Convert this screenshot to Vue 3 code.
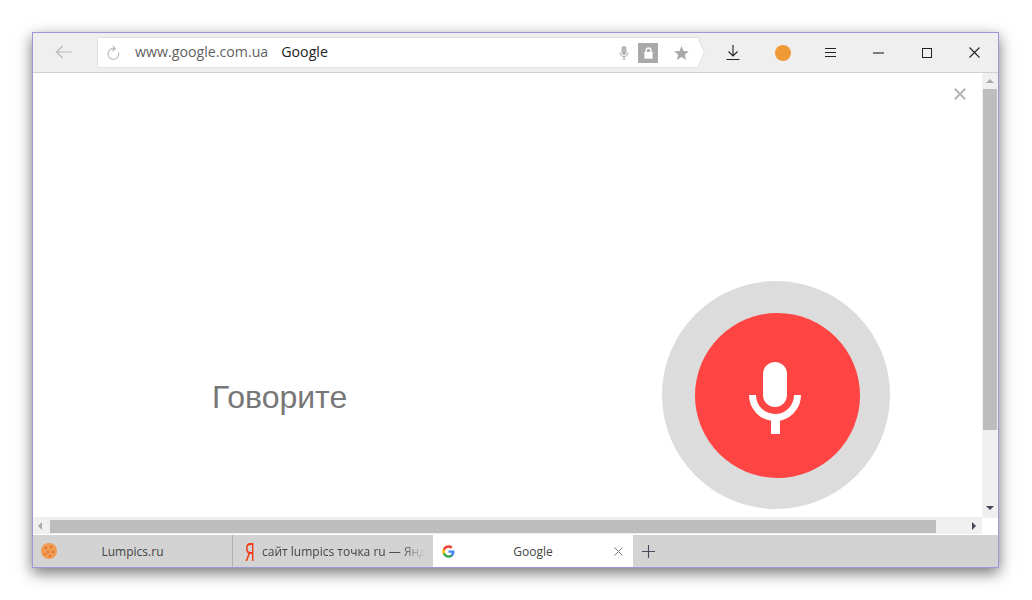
<template>
  <div class="screen">
    <div class="window">
      <header class="toolbar">
        <button class="back">
          <svg width="18" height="14" viewBox="0 0 18 14"><path d="M17 7H1.500M7.500 1L1.500 7l6 6" fill="none" stroke="#b9b9b9" stroke-width="1.200" /></svg>
        </button>
        <div class="address">
          <div class="address-box">
            <svg class="reload" width="14" height="16" viewBox="0 0 14 16"><path d="M8.500 3.600A5.400 5.400 0 1 0 12.600 7.500" fill="none" stroke="#b5b5b5" stroke-width="1.100" /><path d="M6.500 0.800L9.400 3.600 6.500 6" fill="none" stroke="#b5b5b5" stroke-width="1.100" /></svg>
            <span class="host">www.google.com.ua</span>
            <span class="title">Google</span>
            <svg class="small-mic" width="10" height="14" viewBox="0 0 10 14"><rect x="2.500" y="0" width="5" height="9" rx="2.500" fill="#b7b7b7" /><path d="M1 6.500a4 4 0 0 0 8 0" fill="none" stroke="#b7b7b7" stroke-width="1.200" /><rect x="4.300" y="10" width="1.500" height="4" fill="#b7b7b7" /></svg>
            <span class="lock">
              <svg width="9" height="12" viewBox="0 0 12 15"><rect x="0.500" y="6" width="11" height="9" fill="#fff" /><path d="M2.800 6.500V4a3.200 3.200 0 0 1 6.400 0v2.500" fill="none" stroke="#fff" stroke-width="1.800" /></svg>
            </span>
            <svg class="star" width="15" height="14" viewBox="0 0 15 14"><path d="M7.500 0l2 4.900 5.300.4-4 3.400 1.300 5.200-4.600-2.800-4.600 2.800 1.300-5.200-4-3.400 5.300-.4z" fill="#a9a9a9" /></svg>
          </div>
          <svg class="address-tip" width="8" height="31" viewBox="0 0 8 31"><path d="M0 0.500H0.500L7.300 15.500 0.500 30.500H0z" fill="#fff" stroke="#e2e2e2" /><rect x="0" y="1" width="1" height="29" fill="#fff" /></svg>
        </div>
        <div class="actions">
          <span class="tool tool-download">
            <svg width="14" height="15" viewBox="0 0 14 15"><path d="M7 0v11M2.500 6.500L7 11l4.500-4.500M0.500 14.500h13" fill="none" stroke="#222" stroke-width="1.100" /></svg>
          </span>
          <span class="tool"><i class="orange"></i></span>
          <span class="tool">
            <svg width="11" height="10" viewBox="0 0 11 10"><path d="M0 .5h11M0 4.500h11M0 8.500h11" stroke="#222" /></svg>
          </span>
          <span class="tool">
            <svg width="11" height="2" viewBox="0 0 11 2"><path d="M0 1h11" stroke="#222" stroke-width="1.100" /></svg>
          </span>
          <span class="tool">
            <svg width="10" height="10" viewBox="0 0 10 10"><rect x=".5" y=".5" width="9" height="9" fill="none" stroke="#222" /></svg>
          </span>
          <span class="tool">
            <svg width="11" height="11" viewBox="0 0 11 11"><path d="M.5.500l10 10M10.500.500l-10 10" stroke="#222" stroke-width="1.100" /></svg>
          </span>
        </div>
      </header>

      <div class="viewport">
        <div class="main-col">
          <main class="page">
            <svg class="page-close" width="12" height="12" viewBox="0 0 12 12"><path d="M.8.800l10.400 10.400M11.200.800L.8 11.200" stroke="#b4b4b4" stroke-width="2" /></svg>
            <div class="speech">
              <span class="speak">Говорите</span>
              <div class="mic-ring">
                <div class="mic-circle">
                  <svg width="52" height="72" viewBox="0 0 52 72">
                    <rect x="14" y="0" width="24" height="45" rx="12" fill="#fff" />
                    <path d="M3.500 33a22.500 22.500 0 0 0 45 0" fill="none" stroke="#fff" stroke-width="7" />
                    <rect x="22" y="55" width="9" height="17" fill="#fff" />
                  </svg>
                </div>
              </div>
            </div>
          </main>
          <div class="hscroll">
            <i class="arrow-left"></i>
            <div class="hthumb"></div>
            <i class="arrow-right"></i>
          </div>
        </div>
        <div class="side-col">
          <div class="vscroll">
            <i class="arrow-up"></i>
            <div class="vthumb"></div>
            <i class="arrow-down"></i>
          </div>
          <div class="corner"></div>
        </div>
      </div>

      <footer class="tabs">
        <div class="tab">
          <svg class="favicon" width="16" height="16" viewBox="0 0 16 16">
            <circle cx="8" cy="8" r="8" fill="#ef9a4f" />
            <circle cx="5" cy="5" r="1" fill="#d9622b" /><circle cx="10" cy="4" r="1" fill="#d9622b" />
            <circle cx="12" cy="9" r="1" fill="#d9622b" /><circle cx="7" cy="9" r="1" fill="#d9622b" />
            <circle cx="9" cy="13" r="1" fill="#d9622b" /><circle cx="4" cy="11" r="1" fill="#d9622b" />
          </svg>
          <span class="tab-label">Lumpics.ru</span>
        </div>
        <div class="tab tab-search">
          <span class="ya">Я</span>
          <span class="tab-fade">сайт lumpics точка ru — Яндекс</span>
        </div>
        <div class="tab tab-active">
          <svg class="favicon-g" width="13" height="13" viewBox="0 0 48 48">
            <path fill="#4285f4" d="M46 24.500c0-1.600-.1-3.100-.4-4.500H24v8.700h12.400c-.5 2.900-2.100 5.300-4.600 6.900v5.700h7.400C43.500 36.400 46 31 46 24.500z" />
            <path fill="#34a853" d="M24 47c6.200 0 11.400-2 15.200-5.500l-7.400-5.700c-2 1.400-4.700 2.200-7.800 2.200-6 0-11-4-12.800-9.500H3.600v5.900C7.400 41.800 15.100 47 24 47z" />
            <path fill="#fbbc05" d="M11.200 28.500c-.5-1.400-.7-2.900-.7-4.500s.3-3.100.7-4.500v-5.900H3.600C2.100 16.700 1 20.200 1 24s.9 7.300 2.600 10.400l7.600-5.900z" />
            <path fill="#ea4335" d="M24 10c3.400 0 6.400 1.200 8.800 3.400l6.600-6.600C35.400 3.200 30.200 1 24 1 15.100 1 7.400 6.200 3.600 13.600l7.600 5.900C13 14 18 10 24 10z" />
          </svg>
          <span class="tab-label">Google</span>
          <svg class="tab-close" width="9" height="9" viewBox="0 0 9 9"><path d="M.5.500l8 8M8.500.500l-8 8" stroke="#777" /></svg>
        </div>
        <svg class="new-tab" width="13" height="13" viewBox="0 0 13 13"><path d="M6.500 0v13M0 6.500h13" stroke="#4d4558" stroke-width="1.100" /></svg>
      </footer>
    </div>
  </div>
</template>

<script setup>
</script>

<style>
html, body {
  background: #fff;
  overflow: hidden;
}
</style>

<style scoped>
.screen {
  width: 1032px;
  height: 600px;
  padding: 32px 33px 32px 32px;
  box-sizing: border-box;
  font-family: "Open Sans", "Noto Sans", sans-serif;
}

.window {
  height: 536px;
  display: flex;
  flex-direction: column;
  box-sizing: border-box;
  border: 1px solid #9d97d8;
  background: #fff;
  box-shadow: 0 5px 14px rgba(0, 0, 0, 0.55);
}

.toolbar {
  height: 40px;
  flex: none;
  display: flex;
  align-items: center;
  box-sizing: border-box;
  background: #efefef;
  border-bottom: 1px solid #d8cfc8;
}

.back {
  width: 64px;
  height: 30px;
  flex: none;
  padding: 0 2px 2px 0;
  border: 0;
  background: none;
  display: flex;
  align-items: center;
  justify-content: center;
}

.address {
  display: flex;
  align-items: center;
  height: 31px;
  flex: none;
}

.address-box {
  width: 600px;
  height: 31px;
  box-sizing: border-box;
  display: flex;
  align-items: center;
  background: #fff;
  border: 1px solid #e2e2e2;
  border-right: 0;
  font-size: 14.2px;
}

.reload {
  margin-left: 8px;
  flex: none;
}

.host {
  margin: 0 0 2px 15px;
  color: #5f5f5f;
}

.title {
  margin: 0 0 2px 13px;
  color: #222;
}

.small-mic {
  margin-left: auto;
}

.lock {
  width: 20px;
  height: 20px;
  margin-left: 9px;
  background: #aba9a8;
  display: flex;
  align-items: center;
  justify-content: center;
}

.star {
  margin: 0 8px 0 16px;
}

.address-tip {
  display: block;
  flex: none;
}

.actions {
  display: flex;
  flex: 1;
  justify-content: flex-end;
  height: 100%;
}

.tool {
  width: 48px;
  box-sizing: border-box;
  padding-left: 1px;
  display: flex;
  align-items: center;
  justify-content: center;
}

.tool-download {
  padding: 0 2px 0 0;
}

.orange {
  width: 16px;
  height: 16px;
  border-radius: 50%;
  background: #ef9a37;
}

.viewport {
  flex: 1;
  min-height: 0;
  display: flex;
}

.main-col {
  flex: 1;
  min-width: 0;
  display: flex;
  flex-direction: column;
}

.page {
  flex: 1;
  position: relative;
  display: flex;
  flex-direction: column;
  justify-content: flex-end;
  padding-bottom: 8px;
  box-sizing: border-box;
}

.page-close {
  position: absolute;
  top: 15px;
  right: 16px;
}

.speech {
  display: flex;
  align-items: center;
  justify-content: space-between;
  padding: 0 92px 0 179px;
}

.speak {
  font-family: "Liberation Sans", Arial, sans-serif;
  font-size: 32px;
  color: #777;
  margin-top: 4px;
}

.mic-ring {
  width: 228px;
  height: 228px;
  box-sizing: border-box;
  padding: 1px 0 0 2px;
  border-radius: 50%;
  background: #dcdcdc;
  display: flex;
  align-items: center;
  justify-content: center;
}

.mic-circle {
  width: 165px;
  height: 165px;
  flex: none;
  border-radius: 50%;
  background: #ff4444;
  display: flex;
  align-items: center;
  justify-content: center;
}

.mic-circle svg {
  margin: 4px 5px 0 0;
}

.hscroll {
  height: 16px;
  flex: none;
  display: flex;
  align-items: center;
  background: #f0f0f0;
  padding-top: 1px;
  margin-bottom: 1px;
}

.hthumb {
  width: 886px;
  height: 13px;
  background: #bdbdbd;
}

.arrow-left,
.arrow-right,
.arrow-up,
.arrow-down {
  display: block;
  width: 0;
  height: 0;
  flex: none;
  border-style: solid;
  border-color: transparent;
}

.arrow-left {
  margin-left: 5px;
  border-width: 4px 4px 4px 0;
  border-right-color: #a8a8a8;
  margin-right: 8px;
}

.arrow-right {
  margin-left: 36px;
  border-width: 4px 0 4px 4px;
  border-left-color: #4d4558;
}

.side-col {
  width: 16px;
  flex: none;
  display: flex;
  flex-direction: column;
}

.vscroll {
  flex: 1;
  display: flex;
  flex-direction: column;
  align-items: center;
  background: #f0f0f0;
  padding-top: 6px;
  box-sizing: border-box;
}

.arrow-up {
  border-width: 0 4px 4px;
  border-bottom-color: #a8a8a8;
}

.vthumb {
  width: 14px;
  height: 341px;
  margin-top: 6px;
  background: #bdbdbd;
}

.arrow-down {
  margin-top: 76px;
  border-width: 4px 4px 0;
  border-top-color: #4d4558;
}

.corner {
  height: 17px;
  flex: none;
  background: #fff;
}

.tabs {
  height: 32px;
  flex: none;
  display: flex;
  align-items: center;
  background: #d3d3d3;
  font-size: 12px;
  color: #444;
}

.tab {
  width: 200px;
  height: 100%;
  flex: none;
  box-sizing: border-box;
  position: relative;
  display: flex;
  align-items: center;
  justify-content: center;
}

.tab:first-child {
  border-right: 1px solid #b1b1b1;
}

.favicon {
  position: absolute;
  left: 8px;
  top: 8px;
}

.favicon-g {
  position: absolute;
  left: 9px;
  top: 10px;
}

.tab-search {
  justify-content: flex-start;
  padding-left: 12px;
}

.ya {
  width: 17px;
  flex: none;
  color: #f33b11;
  font-family: "Noto Sans", sans-serif;
  font-size: 25px;
  line-height: 1;
  transform: scaleX(0.62);
  transform-origin: left center;
}

.tab-fade {
  width: 163px;
  white-space: nowrap;
  overflow: hidden;
  -webkit-mask-image: linear-gradient(90deg, #000 85%, transparent);
  mask-image: linear-gradient(90deg, #000 85%, transparent);
}

.tab-active {
  background: #fff;
}

.tab-close {
  position: absolute;
  right: 10px;
  top: 12px;
}

.new-tab {
  margin-left: 9px;
}
</style>
